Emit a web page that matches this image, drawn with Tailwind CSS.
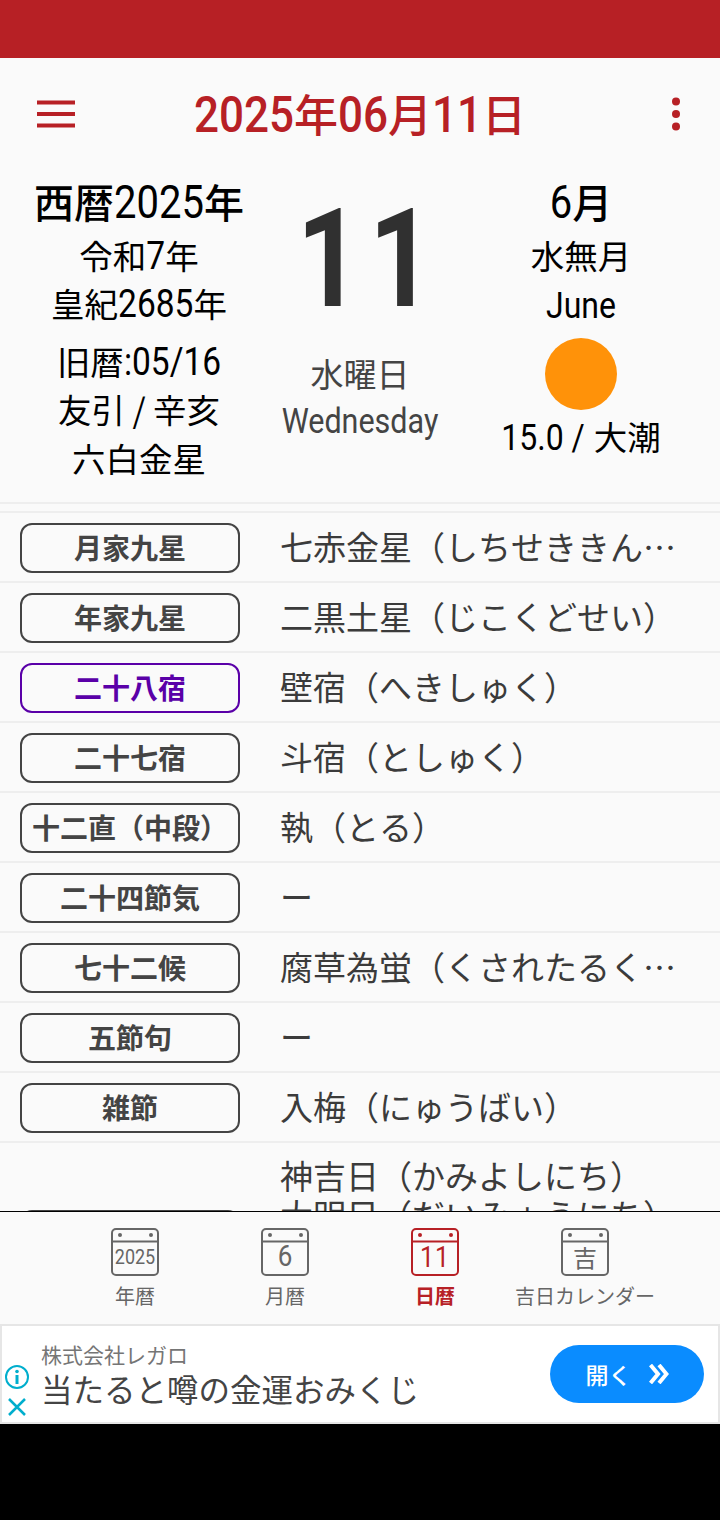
<!DOCTYPE html>
<html lang="ja"><head><meta charset="utf-8">
<script src="https://cdn.jsdelivr.net/npm/@tailwindcss/browser@4"></script>
</head>
<body class="m-0 bg-black">
<div class="w-[720px] h-[1520px] flex flex-col overflow-hidden bg-black font-['Noto_Sans_CJK_JP','Noto_Sans',sans-serif]">
  <div class="h-[58px] shrink-0 bg-[#b72025]"></div>
  <main class="h-[1153px] shrink-0 overflow-hidden bg-[#fafafa]">
    <header class="h-[112px] flex items-center justify-between px-[37px]">
      <div class="w-[80px]"><svg width="38" height="28" viewBox="0 0 38 28" class="block"><path d="M0 2.5h38M0 14h38M0 25.500h38" stroke="#b72025" stroke-width="4"/></svg></div>
      <h1 class="text-[44px] leading-[60px] mb-[3px] font-medium text-[#b72025] whitespace-nowrap"><span class="inline-block font-['Roboto'] font-medium leading-none origin-[50%_84%] scale-y-[1.15]">2025</span>年<span class="inline-block font-['Roboto'] font-medium leading-none origin-[50%_84%] scale-y-[1.15]">06</span>月<span class="inline-block font-['Roboto'] font-medium leading-none origin-[50%_84%] scale-y-[1.15]">11</span>日</h1>
      <div class="w-[80px] flex justify-end pr-[3px]"><svg width="8" height="34" viewBox="0 0 8 34" class="block"><circle cx="4" cy="4.500" r="4" fill="#b72025"/><circle cx="4" cy="17" r="4" fill="#b72025"/><circle cx="4" cy="29.500" r="4" fill="#b72025"/></svg></div>
    </header>
    <section class="h-[334px] flex border-b-2 border-[#eeeeee]">
      <div class="w-[278px] pt-[6px] flex flex-col items-center text-black whitespace-nowrap">
        <div class="text-[40px] leading-[50px] font-medium">西暦<span class="inline-block font-['Roboto'] font-normal leading-none origin-[50%_84%] scale-y-[1.15]">2025</span>年</div>
        <div class="text-[33.500px] leading-[48px] mt-[5px]">令和<span class="inline-block font-['Roboto'] leading-none origin-[50%_84%] scale-y-[1.15]">7</span>年</div>
        <div class="text-[33.500px] leading-[48px]">皇紀<span class="inline-block font-['Roboto'] leading-none origin-[50%_84%] scale-y-[1.15]">2685</span>年</div>
        <div class="text-[33.500px] leading-[48px] mt-[10px]">旧暦<span class="inline-block font-['Roboto'] leading-none origin-[50%_84%] scale-y-[1.15]">:05/16</span></div>
        <div class="text-[33.500px] leading-[48px]">友引 / 辛亥</div>
        <div class="text-[33.500px] leading-[48px] mt-[1px]">六白金星</div>
      </div>
      <div class="w-[164px] flex flex-col items-center text-[#303030] whitespace-nowrap">
        <div class="h-[170px] pt-[4px] text-[112px] leading-[166px] font-bold tracking-[8px]"><span class="inline-block ml-[18px] font-['Roboto'] leading-none origin-[50%_84%] scale-y-[1.22]">11</span></div>
        <div class="text-[33px] leading-[46px] text-[#444444] mt-[10px]">水曜日</div>
        <div class="text-[30.500px] leading-[46px] mt-[1px] text-[#444444]"><span class="inline-block font-['Roboto'] leading-none origin-[50%_84%] scale-y-[1.15]">Wednesday</span></div>
      </div>
      <div class="w-[278px] pt-[6px] flex flex-col items-center text-black whitespace-nowrap">
        <div class="text-[40px] leading-[50px] font-medium"><span class="inline-block font-['Roboto'] font-normal leading-none origin-[50%_84%] scale-y-[1.15]">6</span>月</div>
        <div class="text-[33.500px] leading-[48px] mt-[5px]">水無月</div>
        <div class="text-[32px] leading-[48px] mt-[1px]"><span class="inline-block font-['Roboto'] leading-none origin-[50%_84%] scale-y-[1.15]">June</span></div>
        <div class="w-[72px] h-[72px] rounded-full bg-[#ff9209] mt-[10px]"></div>
        <div class="text-[33.500px] leading-[48px] mt-[2px]"><span class="inline-block font-['Roboto'] text-[32px] leading-none mr-[9px] origin-[50%_84%] scale-y-[1.15]">15.0 /</span>大潮</div>
      </div>
    </section>
    <div class="h-[7px]"></div>
    <ul class="border-t-2 border-[#eeeeee] text-[#3b3b3b]">
      <li class="h-[70px] flex items-center border-b-2 border-[#eeeeee] pl-[20px] pt-[2px]"><span class="w-[220px] h-[50px] pb-[2px] shrink-0 rounded-[12px] border-2 border-[#444444] flex items-center justify-center text-[28px] font-bold text-[#444444] whitespace-nowrap">月家九星</span><span class="ml-[40px] pb-[2px] text-[33px] whitespace-nowrap">七赤金星（しちせききん…</span></li>
      <li class="h-[70px] flex items-center border-b-2 border-[#eeeeee] pl-[20px] pt-[2px]"><span class="w-[220px] h-[50px] pb-[2px] shrink-0 rounded-[12px] border-2 border-[#444444] flex items-center justify-center text-[28px] font-bold text-[#444444] whitespace-nowrap">年家九星</span><span class="ml-[40px] pb-[2px] text-[33px] whitespace-nowrap">二黒土星（じこくどせい）</span></li>
      <li class="h-[70px] flex items-center border-b-2 border-[#eeeeee] pl-[20px] pt-[2px]"><span class="w-[220px] h-[50px] pb-[2px] shrink-0 rounded-[12px] border-2 border-[#5a00a8] flex items-center justify-center text-[28px] font-bold text-[#5a00a8] whitespace-nowrap">二十八宿</span><span class="ml-[40px] pb-[2px] text-[33px] whitespace-nowrap">壁宿（へきしゅく）</span></li>
      <li class="h-[70px] flex items-center border-b-2 border-[#eeeeee] pl-[20px] pt-[2px]"><span class="w-[220px] h-[50px] pb-[2px] shrink-0 rounded-[12px] border-2 border-[#444444] flex items-center justify-center text-[28px] font-bold text-[#444444] whitespace-nowrap">二十七宿</span><span class="ml-[40px] pb-[2px] text-[33px] whitespace-nowrap">斗宿（としゅく）</span></li>
      <li class="h-[70px] flex items-center border-b-2 border-[#eeeeee] pl-[20px] pt-[2px]"><span class="w-[220px] h-[50px] pb-[2px] shrink-0 rounded-[12px] border-2 border-[#444444] flex items-center justify-center text-[28px] font-bold text-[#444444] whitespace-nowrap">十二直（中段）</span><span class="ml-[40px] pb-[2px] text-[33px] whitespace-nowrap">執（とる）</span></li>
      <li class="h-[70px] flex items-center border-b-2 border-[#eeeeee] pl-[20px] pt-[2px]"><span class="w-[220px] h-[50px] pb-[2px] shrink-0 rounded-[12px] border-2 border-[#444444] flex items-center justify-center text-[28px] font-bold text-[#444444] whitespace-nowrap">二十四節気</span><span class="ml-[40px] pb-[2px] text-[33px] whitespace-nowrap">ー</span></li>
      <li class="h-[70px] flex items-center border-b-2 border-[#eeeeee] pl-[20px] pt-[2px]"><span class="w-[220px] h-[50px] pb-[2px] shrink-0 rounded-[12px] border-2 border-[#444444] flex items-center justify-center text-[28px] font-bold text-[#444444] whitespace-nowrap">七十二候</span><span class="ml-[40px] pb-[2px] text-[33px] whitespace-nowrap">腐草為蛍（くされたるく…</span></li>
      <li class="h-[70px] flex items-center border-b-2 border-[#eeeeee] pl-[20px] pt-[2px]"><span class="w-[220px] h-[50px] pb-[2px] shrink-0 rounded-[12px] border-2 border-[#444444] flex items-center justify-center text-[28px] font-bold text-[#444444] whitespace-nowrap">五節句</span><span class="ml-[40px] pb-[2px] text-[33px] whitespace-nowrap">ー</span></li>
      <li class="h-[70px] flex items-center border-b-2 border-[#eeeeee] pl-[20px] pt-[2px]"><span class="w-[220px] h-[50px] pb-[2px] shrink-0 rounded-[12px] border-2 border-[#444444] flex items-center justify-center text-[28px] font-bold text-[#444444] whitespace-nowrap">雑節</span><span class="ml-[40px] pb-[2px] text-[33px] whitespace-nowrap">入梅（にゅうばい）</span></li>
      <li class="h-[184px] flex items-center pl-[20px]"><span class="w-[220px] h-[50px] shrink-0 rounded-[12px] border-2 border-[#444444] flex items-center justify-center text-[28px] font-bold text-[#444444] whitespace-nowrap">吉日</span><span class="ml-[40px] pb-[2px] text-[33px] leading-[39px] whitespace-nowrap">神吉日（かみよしにち）<br>大明日（だいみょうにち）<br>母倉日（ぼそうにち）<br>天恩日（てんおんにち）</span></li>
    </ul>
  </main>
  <nav class="h-[113px] shrink-0 border-t border-black bg-[#fafafa] flex pl-[60px] pt-[16px]">
    <a class="w-[150px] flex flex-col items-center text-[#666666]">
      <svg width="48" height="48" viewBox="0 0 48 48" class="block"><rect x="1" y="1" width="46" height="46" rx="4" fill="none" stroke="#666666" stroke-width="2"/><path d="M1 13.500h46" stroke="#666666" stroke-width="2"/><circle cx="9" cy="7" r="2" fill="#666666"/><circle cx="40" cy="7" r="2" fill="#666666"/><text transform="translate(24 35.500) scale(1 1.15)" text-anchor="middle" font-size="18" font-family="Roboto" fill="#666666">2025</text></svg>
      <span class="text-[20px] leading-[28px] mt-[6px] whitespace-nowrap">年暦</span>
    </a>
    <a class="w-[150px] flex flex-col items-center text-[#666666]">
      <svg width="48" height="48" viewBox="0 0 48 48" class="block"><rect x="1" y="1" width="46" height="46" rx="4" fill="none" stroke="#666666" stroke-width="2"/><path d="M1 13.500h46" stroke="#666666" stroke-width="2"/><circle cx="9" cy="7" r="2" fill="#666666"/><circle cx="40" cy="7" r="2" fill="#666666"/><text transform="translate(24 38) scale(1 1.15)" text-anchor="middle" font-size="26" font-family="Roboto" fill="#666666">6</text></svg>
      <span class="text-[20px] leading-[28px] mt-[6px] whitespace-nowrap">月暦</span>
    </a>
    <a class="w-[150px] flex flex-col items-center text-[#b72025]">
      <svg width="48" height="48" viewBox="0 0 48 48" class="block"><rect x="1" y="1" width="46" height="46" rx="4" fill="none" stroke="#b72025" stroke-width="2"/><path d="M1 13.500h46" stroke="#b72025" stroke-width="2"/><circle cx="9" cy="7" r="2" fill="#b72025"/><circle cx="40" cy="7" r="2" fill="#b72025"/><text transform="translate(24 38.500) scale(1 1.15)" text-anchor="middle" font-size="25" font-family="Roboto" letter-spacing="1" fill="#b72025">11</text></svg>
      <span class="text-[20px] leading-[28px] mt-[6px] font-bold whitespace-nowrap">日暦</span>
    </a>
    <a class="w-[150px] flex flex-col items-center text-[#666666]">
      <svg width="48" height="48" viewBox="0 0 48 48" class="block"><rect x="1" y="1" width="46" height="46" rx="4" fill="none" stroke="#666666" stroke-width="2"/><path d="M1 13.500h46" stroke="#666666" stroke-width="2"/><circle cx="9" cy="7" r="2" fill="#666666"/><circle cx="40" cy="7" r="2" fill="#666666"/><text x="24" y="39" text-anchor="middle" font-size="24" fill="#666666">吉</text></svg>
      <span class="text-[20px] leading-[28px] mt-[6px] whitespace-nowrap">吉日カレンダー</span>
    </a>
  </nav>
  <aside class="relative h-[100px] shrink-0 bg-white border-2 border-[#e6e6e6] flex items-center justify-between pr-[14px] pl-[39px]">
    <div class="text-[#444444] whitespace-nowrap">
      <div class="text-[21px] leading-[28px] text-[#757575]">株式会社レガロ</div>
      <div class="text-[31.500px] leading-[40px]">当たると噂の金運おみくじ</div>
    </div>
    <div class="w-[154px] h-[58px] rounded-full bg-[#0a8cff] text-white flex items-center justify-center gap-[17px]">
      <span class="text-[23px] font-medium">開く</span>
      <svg width="20" height="20" viewBox="0 0 20 20" class="block"><path d="M1.500 1l7.500 9-7.500 9M10 1l7.500 9-7.500 9" fill="none" stroke="#ffffff" stroke-width="4"/></svg>
    </div>
    <svg width="26" height="26" viewBox="0 0 26 26" class="absolute left-[2px] top-[38px]"><circle cx="13" cy="13" r="11" fill="none" stroke="#00aecd" stroke-width="2"/><circle cx="13" cy="7.500" r="1.800" fill="#00aecd"/><path d="M13 11v9" stroke="#00aecd" stroke-width="3"/></svg>
    <svg width="20" height="20" viewBox="0 0 20 20" class="absolute left-[5px] top-[71px]"><path d="M2 2l16 16M18 2L2 18" stroke="#00aecd" stroke-width="2.500"/></svg>
  </aside>
  <div class="flex-1 bg-black"></div>
</div>
</body></html>
